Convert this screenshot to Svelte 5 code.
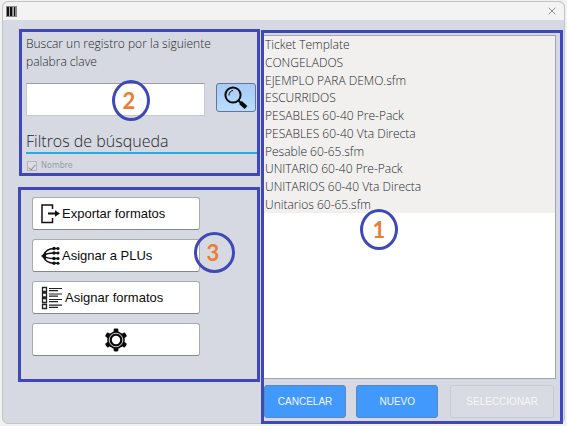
<script>
  const formats = [
    'Ticket Template',
    'CONGELADOS',
    'EJEMPLO PARA DEMO.sfm',
    'ESCURRIDOS',
    'PESABLES 60-40 Pre-Pack',
    'PESABLES 60-40 Vta Directa',
    'Pesable 60-65.sfm',
    'UNITARIO 60-40 Pre-Pack',
    'UNITARIOS 60-40 Vta Directa',
    'Unitarios 60-65.sfm'
  ];
  let query = $state('');
  let byName = $state(true);
</script>

<div class="page">
  <div class="window">
    <header>
      <svg width="11" height="11" viewBox="0 0 11 11" aria-hidden="true">
        <rect width="11" height="11" fill="#8a8a8a" />
        <path d="M1 1h2v9H1zM4 1h2v9H4zM8 1h1v9H8z" fill="#111" />
        <path d="M3 1h1v9H3zM7 1h1v9H7z" fill="#aaa" />
      </svg>
      <button class="close" aria-label="Cerrar">
        <svg width="8" height="8" viewBox="0 0 8 8"><path d="M.7.7l6.6 6.6M7.3.7L.7 7.3" stroke="#909090" stroke-width="1" /></svg>
      </button>
    </header>

    <main>
      <div class="left">
        <section class="frame search">
          <label class="prompt" for="query">Buscar un registro por la siguiente palabra clave</label>
          <div class="row">
            <input id="query" class="query" type="text" bind:value={query} />
            <button class="find" aria-label="Buscar">
              <svg width="24" height="24" viewBox="0 0 24 24" fill="none" stroke="#0a0a0a">
                <circle cx="9" cy="9" r="7.6" stroke-width="2" />
                <path d="M5 9.5A4.5 4.5 0 0 1 9 4.5" stroke-width="1" />
                <path d="M14.5 14.5l3 3" stroke-width="2" />
                <path d="M16.5 16.5l5.5 5" stroke-width="4" />
              </svg>
            </button>
          </div>
          <h2>Filtros de búsqueda</h2>
          <label class="filter">
            <input type="checkbox" bind:checked={byName} disabled />
            <span>Nombre</span>
          </label>
          <span class="badge two">2</span>
        </section>

        <section class="frame actions">
          <button>
            <svg width="19" height="20" viewBox="0 0 19 20" fill="none" stroke="#111" stroke-width="1.5">
              <path d="M11.5 5V1H1v17.5h10.500V14" />
              <path d="M7 9.500h8" stroke-width="2" />
              <path d="M14 6.200l5 3.300-5 3.300z" fill="#111" stroke="none" />
            </svg>
            Exportar formatos
          </button>
          <button>
            <svg width="19" height="20" viewBox="0 0 19 20" fill="none" stroke="#111" stroke-width="1.400">
              <path d="M2 10C4 5 8 2.500 13 2.500h5M2 10c3-2.500 6-3 11-3h5M2 10c3 2 6 2.500 11 2.500h5M2 10c2 5 6 7.200 11 7.200h5" />
              <path d="M0 10l5-4v8z" fill="#111" stroke="none" />
              <g fill="#111" stroke="none">
                <circle cx="13" cy="2.500" r="1.700" /><circle cx="17" cy="2.500" r="1.500" />
                <circle cx="13" cy="7" r="1.700" /><circle cx="17" cy="7" r="1.500" />
                <circle cx="13" cy="12.500" r="1.700" /><circle cx="17" cy="12.500" r="1.500" />
                <circle cx="13" cy="17.200" r="1.700" /><circle cx="17" cy="17.200" r="1.500" />
              </g>
            </svg>
            Asignar a PLUs
          </button>
          <button>
            <svg width="22" height="24" viewBox="0 0 22 24" fill="none" stroke="#222">
              <path d="M1.500 1.500h4v4h-4zM1.500 7h4v4h-4zM1.500 12.500h4v4h-4zM1.500 18.500h4v4h-4z" stroke-width="1.300" />
              <path d="M8 2.500h13M8 4.700h9M8 8h13M8 10.200h9M8 13.500h13M8 15.700h9M8 19.200h13M8 21.400h9" stroke-width="1.200" />
            </svg>
            Asignar formatos
          </button>
          <button class="gear" aria-label="Configuración">
            <svg width="22" height="24" viewBox="-11 -12 22 24">
              <g fill="#0a0a0a">
                <circle r="8.800" />
                {#each [0, 60, 120, 180, 240, 300] as angle}
                  <rect x="-2.400" y="-11.500" width="4.800" height="5" rx="1.400" transform="rotate({angle})" />
                {/each}
              </g>
              <circle r="6.800" fill="none" stroke="#fff" stroke-width=".8" />
              <circle r="4.200" fill="#fff" />
            </svg>
          </button>
          <span class="badge three">3</span>
        </section>
      </div>

      <section class="frame right">
        <div class="list">
          <ul>
            {#each formats as name}
              <li>{name}</li>
            {/each}
          </ul>
        </div>
        <div class="buttons">
          <button>CANCELAR</button>
          <button>NUEVO</button>
          <button class="select" disabled>SELECCIONAR</button>
        </div>
        <span class="badge one">1</span>
      </section>
    </main>
  </div>
</div>

<style>
  :global(body) {
    margin: 0;
    background: #f1f1f1;
  }
  * {
    box-sizing: border-box;
  }
  button {
    font-family: 'Liberation Sans', Arial, sans-serif;
    padding: 0;
    margin: 0;
  }
  svg {
    display: block;
    flex: none;
  }
  .page {
    min-height: 100vh;
    display: flex;
    padding: 1px 2px 2px;
    font-family: 'Open Sans', 'Noto Sans', sans-serif;
    font-weight: 300;
    color: #25272b;
  }
  .window {
    flex: 1;
    display: flex;
    flex-direction: column;
    border: 1px solid #c4c4c6;
    border-radius: 6px;
    background: #d6d9e1;
  }
  header {
    height: 18px;
    display: flex;
    align-items: center;
    justify-content: space-between;
    padding: 0 8px 0 3px;
    background: #f3f3f3;
    border-radius: 6px 6px 0 0;
  }
  .close {
    border: 0;
    background: none;
  }
  main {
    flex: 1;
    display: grid;
    grid-template-columns: minmax(0, 242fr) minmax(0, 302fr);
    gap: 1px;
    padding: 9px 1px 0 15px;
  }
  .frame {
    position: relative;
    border: 3px solid #3f48b9;
  }
  .left {
    display: flex;
    flex-direction: column;
    gap: 11px;
  }
  .search {
    height: 147px;
    margin-left: 1px;
    padding: 3px 0 0 4px;
  }
  .prompt {
    display: block;
    width: 200px;
    font-size: 12px;
    line-height: 18px;
  }
  .row {
    display: flex;
    gap: 11px;
    margin-top: 12px;
    padding-right: 1px;
  }
  .query {
    flex: 1;
    min-width: 0;
    height: 33px;
    border: 1px solid #c6c8cd;
    border-top: 1px solid #9b9da2;
    background: #fff;
    padding: 0 4px;
    font: inherit;
  }
  .find {
    width: 40px;
    height: 29px;
    display: grid;
    place-items: center;
    border: 1px solid #5f7898;
    border-radius: 3px;
    background: linear-gradient(#a8cbf6, #b9dcff);
  }
  h2 {
    margin: 14px 0 0;
    border-bottom: 2px solid #2fa9d8;
    font-size: 16px;
    line-height: 22px;
    font-weight: 300;
  }
  .filter {
    display: flex;
    align-items: center;
    gap: 4px;
    margin-top: 6px;
    padding-left: 1px;
    font: 8px/12px 'DejaVu Sans', sans-serif;
    color: #9a9ca2;
  }
  .filter input {
    appearance: none;
    width: 10px;
    height: 10px;
    margin: 0;
    border: 1px solid #b3b5ba;
    background: #dcdee3;
    display: grid;
    place-items: center;
  }
  .filter input:checked::after {
    content: '';
    width: 3px;
    height: 6px;
    border: solid #8d9096;
    border-width: 0 1px 1px 0;
    transform: rotate(40deg);
  }
  .actions {
    height: 195px;
    display: flex;
    flex-direction: column;
    gap: 9px;
    padding: 7px 57px 0 11px;
  }
  .actions button {
    height: 33px;
    display: flex;
    align-items: center;
    gap: 2px;
    padding-left: 8px;
    border: 1px solid #a9abb0;
    border-bottom-color: #85878c;
    border-radius: 3px;
    background: #fff;
    font-size: 13px;
    color: #0c0c0c;
  }
  .actions .gear {
    justify-content: center;
    padding: 0;
  }
  .right {
    display: flex;
    flex-direction: column;
    margin: 1px 0 -1px;
    padding: 2px 4px 3px 0;
  }
  .list {
    flex: 1;
    border: 1px solid #a2a5ac;
    border-left: 0;
    background: #fff;
  }
  ul {
    height: 177px;
    display: grid;
    grid-auto-rows: 1fr;
    align-items: center;
    margin: 0;
    padding: 0 0 0 1px;
    list-style: none;
    background: #f1f0ef;
    font-size: 12px;
    line-height: 17px;
  }
  .buttons {
    display: flex;
    gap: 10px;
    padding: 6px 2px 0 0;
  }
  .buttons button {
    flex: 82;
    height: 33px;
    border: 1px solid #5b87bd;
    border-radius: 3px;
    background: #4299fd;
    color: #f2f8ff;
    font-size: 10px;
  }
  .buttons .select {
    flex: 104;
    margin-left: 2px;
    border-color: #c8cbd2;
    background: #d8dbe1;
    color: #f5f6f8;
  }
  .badge {
    position: absolute;
    display: grid;
    place-items: center;
    width: 38px;
    height: 41px;
    border: 3px solid #3f48b9;
    border-radius: 50%;
    font: 700 22px/24px Lato, sans-serif;
    color: #ed7d31;
  }
  .one {
    left: 96px;
    top: 176px;
  }
  .two {
    left: 90px;
    top: 48px;
    padding-right: 4px;
  }
  .three {
    left: 173px;
    top: 42px;
    width: 41px;
    padding-right: 3px;
  }
</style>
